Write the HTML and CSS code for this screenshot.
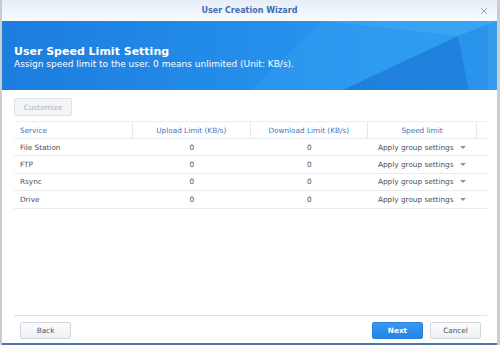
FILE: index.html
```html
<!DOCTYPE html>
<html lang="en">
<head>
  <meta charset="UTF-8">
  <title>User Creation Wizard</title>
  <link rel="stylesheet" href="styles.css">
</head>
<body>

<div id="wizard">
  <div id="title-bar">
    <span class="title">User Creation Wizard</span>
    <svg class="close" width="8" height="8" viewBox="0 0 8 8"><path d="M1 1L7 7M7 1L1 7" stroke="#9aa4af" stroke-width="1"/></svg>
  </div>

  <div id="banner">
    <svg class="facets" width="495" height="69" viewBox="0 0 495 69" preserveAspectRatio="none">
      <polygon points="250,69 320,0 456,15 341,69" fill="#3aa4f3" opacity="0.35"/>
      <polygon points="320,0 495,0 456,15" fill="#46b0f6" opacity="0.5"/>
      <polygon points="341,69 456,15 467,69" fill="#1666c8" opacity="0.45"/>
      <polygon points="456,15 495,0 495,69 467,69" fill="#2a8fe8" opacity="0.6"/>
      <polygon points="486,0 495,0 495,69 486,69" fill="#48a8f0" opacity="0.4"/>
    </svg>
    <div class="banner-title">User Speed Limit Setting</div>
    <div class="banner-sub">Assign speed limit to the user. 0 means unlimited (Unit: KB/s).</div>
  </div>

  <div id="content">
    <button class="btn btn-disabled">Customize</button>

    <div class="grid">
      <div class="row head">
        <div class="cell c-service">Service</div>
        <div class="cell c-num">Upload Limit (KB/s)</div>
        <div class="cell c-num">Download Limit (KB/s)</div>
        <div class="cell c-limit center">Speed limit</div>
        <div class="cell c-pad"></div>
      </div>
      <div class="row">
        <div class="cell c-service">File Station</div>
        <div class="cell c-num">0</div>
        <div class="cell c-num">0</div>
        <div class="cell c-limit">Apply group settings <span class="caret"></span></div>
        <div class="cell c-pad"></div>
      </div>
      <div class="row">
        <div class="cell c-service">FTP</div>
        <div class="cell c-num">0</div>
        <div class="cell c-num">0</div>
        <div class="cell c-limit">Apply group settings <span class="caret"></span></div>
        <div class="cell c-pad"></div>
      </div>
      <div class="row">
        <div class="cell c-service">Rsync</div>
        <div class="cell c-num">0</div>
        <div class="cell c-num">0</div>
        <div class="cell c-limit">Apply group settings <span class="caret"></span></div>
        <div class="cell c-pad"></div>
      </div>
      <div class="row">
        <div class="cell c-service">Drive</div>
        <div class="cell c-num">0</div>
        <div class="cell c-num">0</div>
        <div class="cell c-limit">Apply group settings <span class="caret"></span></div>
        <div class="cell c-pad"></div>
      </div>
    </div>
  </div>

  <div id="footer">
    <button class="btn btn-foot">Back</button>
    <div class="spacer"></div>
    <button class="btn btn-foot btn-primary">Next</button>
    <button class="btn btn-foot">Cancel</button>
  </div>
</div>

</body>
</html>
```

FILE: styles.css
```css
body {
    margin: 0;
    padding: 0;
    background: #c9cdd2;
    font-family: 'DejaVu Sans', Verdana, sans-serif;
    color: #4c5157;
    height: 100vh;
    overflow: hidden;
}

#wizard {
    width: 495px;
    height: 343px;
    margin-left: 2px;
    background: #fff;
    border-bottom: 2px solid #4b74b2;
    display: flex;
    flex-direction: column;
}

#title-bar {
    height: 21px;
    flex: none;
    background: linear-gradient(to bottom, #e6eef8, #f8fbfe);
    display: flex;
    align-items: center;
    justify-content: center;
    position: relative;
}

#title-bar .title {
    font-size: 8px;
    font-weight: bold;
    color: #3d6db3;
}

#title-bar .close {
    position: absolute;
    right: 9px;
    top: 7px;
}

#banner {
    height: 69px;
    flex: none;
    background: linear-gradient(to right, #1c7ddf, #2591ec 60%, #2c9cf1);
    position: relative;
    overflow: hidden;
    padding: 24px 0 0 12px;
    box-sizing: border-box;
    color: #fff;
}

#banner .facets {
    position: absolute;
    left: 0;
    top: 0;
}

.banner-title {
    position: relative;
    font-size: 11px;
    font-weight: bold;
    line-height: 14px;
}

.banner-sub {
    position: relative;
    font-size: 9px;
    line-height: 11px;
}

#content {
    flex: 1;
    padding: 8px 10px 0 12px;
}

.btn {
    font-family: 'DejaVu Sans', Verdana, sans-serif;
    font-size: 7.3px;
    height: 18px;
    border-radius: 2px;
    padding: 0;
    margin: 0;
    cursor: pointer;
}

.btn-disabled {
    display: block;
    width: 58px;
    background: #f3f5f8;
    border: 1px solid #dde2e8;
    color: #aab2bb;
}

.grid {
    margin-top: 5px;
    width: 473px;
    border-top: 1px solid #eceff2;
}

.row {
    display: flex;
    height: 17.4px;
    border-bottom: 1px solid #e9ecef;
    box-sizing: border-box;
    font-size: 7.3px;
    align-items: center;
}

.row.head {
    height: 17px;
    color: #3b77c4;
}

.cell {
    height: 100%;
    display: flex;
    align-items: center;
    box-sizing: border-box;
}

.row.head .cell {
    border-right: 1px solid #e6e9ec;
}

.row.head .cell.c-pad {
    border-right: none;
}

.c-service {
    width: 119px;
    padding-left: 6px;
}

.c-num {
    width: 117.5px;
    justify-content: center;
}

.c-limit {
    width: 109px;
    padding-left: 10px;
}

.c-limit.center {
    justify-content: center;
    padding-left: 0;
}

.c-pad {
    width: 10px;
}

.caret {
    display: inline-block;
    margin-left: 6px;
    width: 0;
    height: 0;
    border-left: 3px solid transparent;
    border-right: 3px solid transparent;
    border-top: 3px solid #8e959d;
}

#footer {
    flex: none;
    margin: 0 10px 0 12px;
    border-top: 1px solid #dfe3e7;
    padding: 6px 6px 4px 6px;
    display: flex;
    align-items: center;
    gap: 7px;
}

.spacer {
    flex: 1;
}

.btn-foot {
    width: 51px;
    height: 17px;
    background: linear-gradient(to bottom, #fbfcfd, #eef1f4);
    border: 1px solid #d2d8de;
    color: #50565c;
}

.btn-primary {
    background: linear-gradient(to bottom, #3797f2, #2485e6);
    border: 1px solid #2a80d8;
    color: #fff;
    font-weight: bold;
}
```
